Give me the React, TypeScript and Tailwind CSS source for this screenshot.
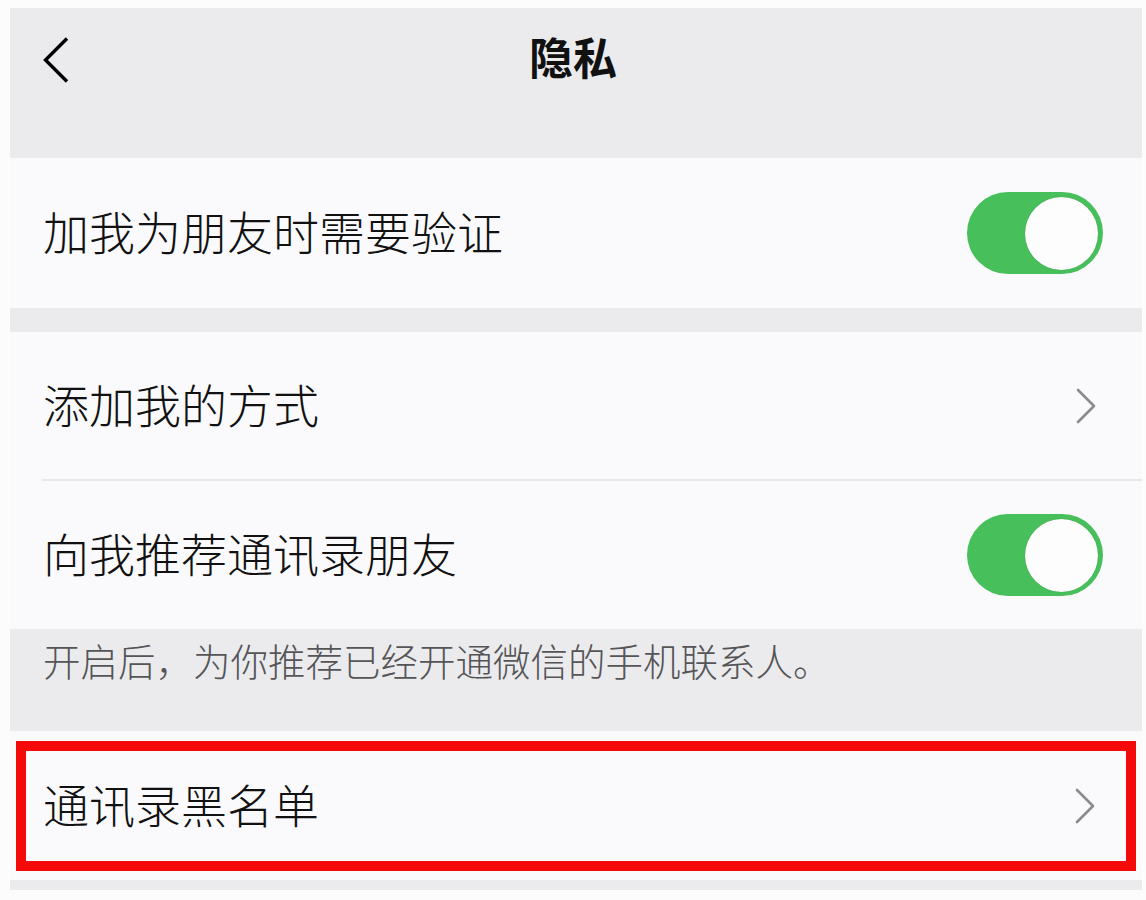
const font = { fontFamily: '"Noto Sans CJK SC", "Noto Sans", sans-serif' };

function Toggle() {
  return (
    <div className="flex h-[82px] w-[136px] items-center justify-end rounded-full bg-[#47bf5b] pr-[5px]">
      <div className="h-[73px] w-[73px] rounded-full bg-[#fdfdfd] shadow-[0_0_1px_rgba(0,0,0,0.25)]" />
    </div>
  );
}

function Chevron() {
  return (
    <svg width="22" height="36" viewBox="0 0 22 36" fill="none">
      <path d="M3 2 L19 18 L3 34" stroke="#8b8b8f" strokeWidth="2.6" strokeLinecap="round" strokeLinejoin="round" />
    </svg>
  );
}

export default function App() {
  return (
    <div className="h-[900px] w-full bg-[#fcfcfd] pl-[10px] pr-[4px] pt-[8px]" style={font}>
      <div className="flex flex-col">
        {/* header */}
        <div className="h-[150px] bg-[#ebebed]">
          <div className="relative flex h-[96px] items-center justify-center pr-[6px]">
            <svg className="absolute left-[33px] top-[29px]" width="26" height="46" viewBox="0 0 26 46" fill="none">
              <path d="M24 1.5 L2.5 23 L24 44.5" stroke="#000" strokeWidth="3.4" strokeLinejoin="miter" />
            </svg>
            <span className="text-[44px] font-bold leading-none text-[#111]">隐私</span>
          </div>
        </div>

        <div className="flex h-[150px] items-center justify-between bg-[#fafafc] pl-[33px] pr-[39px]">
          <span className="mb-[6px] text-[46px] font-light leading-none text-[#111]">加我为朋友时需要验证</span>
          <Toggle />
        </div>

        <div className="h-[24px] bg-[#ebebed]" />

        <div className="bg-[#fafafc]">
          <div className="flex h-[147px] items-center justify-between pl-[33px] pr-[45px]">
            <span className="mb-[6px] text-[46px] font-light leading-none text-[#111]">添加我的方式</span>
            <Chevron />
          </div>
          <div className="ml-[32px] h-[2px] bg-[#e8e8ea]" />
          <div className="flex h-[148px] items-center justify-between pl-[33px] pr-[39px]">
            <span className="mb-[6px] text-[46px] font-light leading-none text-[#111]">向我推荐通讯录朋友</span>
            <Toggle />
          </div>
        </div>

        <div className="h-[102px] bg-[#ebebed] pl-[33px] pt-[12px]">
          <span className="text-[37.5px] font-light leading-none text-[#555558]">开启后，为你推荐已经开通微信的手机联系人。</span>
        </div>

        <div className="bg-[#fafafc] px-[6px] pb-[9px] pt-[10px]">
          <div className="flex h-[130px] items-center justify-between border-[10px] border-[#f50a0a] pl-[17px] pr-[30px]">
            <span className="mb-[6px] text-[46px] font-light leading-none text-[#111]">通讯录黑名单</span>
            <Chevron />
          </div>
        </div>

        <div className="h-[10px] bg-[#ebebed]" />
      </div>
    </div>
  );
}
